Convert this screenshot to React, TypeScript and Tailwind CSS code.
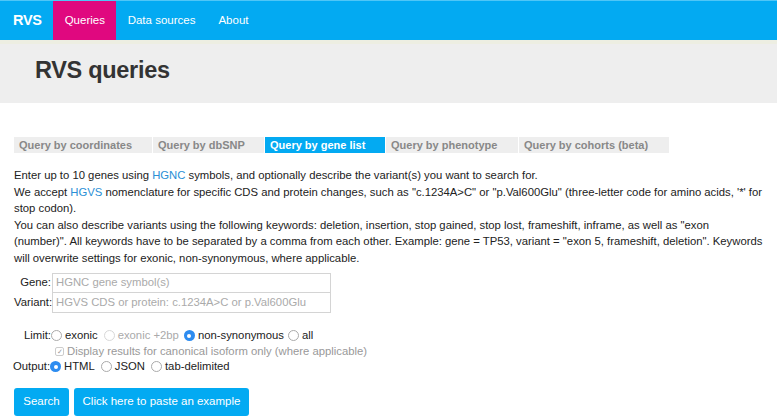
import React from "react";

function Radio({ checked = false, disabled = false }: { checked?: boolean; disabled?: boolean }) {
  if (checked) {
    return (
      <span className="flex items-center justify-center w-[11px] h-[11px] rounded-full bg-[#2d8cf0] mr-[3px]">
        <span className="w-[4px] h-[4px] rounded-full bg-white" />
      </span>
    );
  }
  return (
    <span
      className={
        "block w-[11px] h-[11px] rounded-full border bg-white mr-[3px] " +
        (disabled ? "border-[#d8d8d8]" : "border-[#aaaaaa]")
      }
    />
  );
}

function Opt({ checked, disabled, label, cls = "" }: { checked?: boolean; disabled?: boolean; label: string; cls?: string }) {
  return (
    <span className={"inline-flex items-center " + cls + (disabled ? " text-[#aaaaaa]" : "")}>
      <Radio checked={checked} disabled={disabled} />
      {label}
    </span>
  );
}

export default function App() {
  const tabs = [
    { label: "Query by coordinates", w: "w-[139px]" },
    { label: "Query by dbSNP", w: "w-[112px]" },
    { label: "Query by gene list", w: "w-[121px]", active: true },
    { label: "Query by phenotype", w: "w-[133px]" },
    { label: "Query by cohorts (beta)", w: "w-[151px]" },
  ];
  return (
    <div className="w-[777px] h-[417px] overflow-hidden bg-white text-[#333] font-['Liberation_Sans',Arial,sans-serif]">
      {/* navbar */}
      <div className="h-[40px] bg-[#03aaf2] border-t border-[#4fc6f7] flex items-stretch text-white text-[11.5px]">
        <div className="pl-[13px] pr-[11px] flex items-center text-[14.5px] font-bold tracking-[-0.3px]">RVS</div>
        <div className="bg-[#e0087f] px-[12px] flex items-center w-[63px]">Queries</div>
        <div className="px-[12px] flex items-center">Data sources</div>
        <div className="px-[11px] flex items-center">About</div>
      </div>
      {/* jumbotron */}
      <div className="h-[63px] bg-[#eeeeee] border-t-[4px] border-[#edeee2] flex items-center pl-[35px]">
        <h1 className="text-[23.5px] font-bold text-[#333] tracking-[-0.3px] -mt-[6px]">RVS queries</h1>
      </div>
      {/* content */}
      <div className="px-[14px]">
        <div className="mt-[34px] flex w-[656px] h-[16px] bg-[#eeeeee] text-[11px] font-bold">
          {tabs.map((t) => (
            <div
              key={t.label}
              className={
                "h-full flex items-center pl-[5px] border-r border-white " +
                t.w +
                (t.active ? " bg-[#03aaf2] text-white" : " text-[#888888]")
              }
            >
              {t.label}
            </div>
          ))}
        </div>
        <div className="mt-[14px] text-[11.3px] leading-[16.6px] text-[#222] w-[749px]">
          <p>
            Enter up to 10 genes using <span className="text-[#2a8fd6]">HGNC</span> symbols, and optionally describe the variant(s) you want to search for.
          </p>
          <p>
            We accept <span className="text-[#2a8fd6]">HGVS</span> nomenclature for specific CDS and protein changes, such as "c.1234A&gt;C" or "p.Val600Glu" (three-letter code for amino acids, '*' for stop codon).
          </p>
          <p>
            You can also describe variants using the following keywords: deletion, insertion, stop gained, stop lost, frameshift, inframe, as well as "exon (number)". All keywords have to be separated by a comma from each other. Example: gene = TP53, variant = "exon 5, frameshift, deletion". Keywords will overwrite settings for exonic, non-synonymous, where applicable.
          </p>
        </div>
        <div className="mt-[6px] flex flex-col text-[11.3px]">
          <div className="flex items-center h-[20px]">
            <label className="w-[38px] text-right pr-[1px] text-[#222]">Gene:</label>
            <div className="w-[279px] h-[20px] border border-[#d4d4d4] flex items-center px-[3px] text-[#aaaaaa]">
              HGNC gene symbol(s)
            </div>
          </div>
          <div className="flex items-center h-[20px]">
            <label className="w-[38px] text-right pr-[1px] text-[#222] whitespace-nowrap">Variant:</label>
            <div className="w-[279px] h-[20px] border border-t-0 border-[#d4d4d4] flex items-center px-[3px] text-[#aaaaaa]">
              HGVS CDS or protein: c.1234A&gt;C or p.Val600Glu
            </div>
          </div>
        </div>
        <div className="mt-[15px] text-[11.3px] text-[#222]">
          <div className="flex items-center h-[16px]">
            <span className="w-[37px] text-right">Limit:</span>
            <Opt label="exonic" />
            <Opt label="exonic +2bp" disabled cls="ml-[6px]" />
            <Opt label="non-synonymous" checked cls="ml-[5px]" />
            <Opt label="all" cls="ml-[4px]" />
          </div>
          <div className="flex items-center h-[15px] pl-[41px] text-[#999999]">
            <span className="inline-flex items-center justify-center w-[9px] h-[9px] border border-[#cccccc] rounded-[2px] mr-[3px] text-[7px] leading-none text-[#999]">✓</span>
            Display results for canonical isoform only (where applicable)
          </div>
          <div className="flex items-center h-[16px] -ml-[1px]">
            <span>Output:</span>
            <Opt label="HTML" checked />
            <Opt label="JSON" cls="ml-[6px]" />
            <Opt label="tab-delimited" cls="ml-[6px]" />
          </div>
        </div>
        <div className="mt-[13px] flex gap-[5px] text-[11.5px] text-white">
          <div className="h-[28px] w-[55px] bg-[#03aaf2] rounded-[3px] flex items-center justify-center">Search</div>
          <div className="h-[28px] w-[175px] bg-[#03aaf2] rounded-[3px] flex items-center justify-center">Click here to paste an example</div>
        </div>
      </div>
    </div>
  );
}
